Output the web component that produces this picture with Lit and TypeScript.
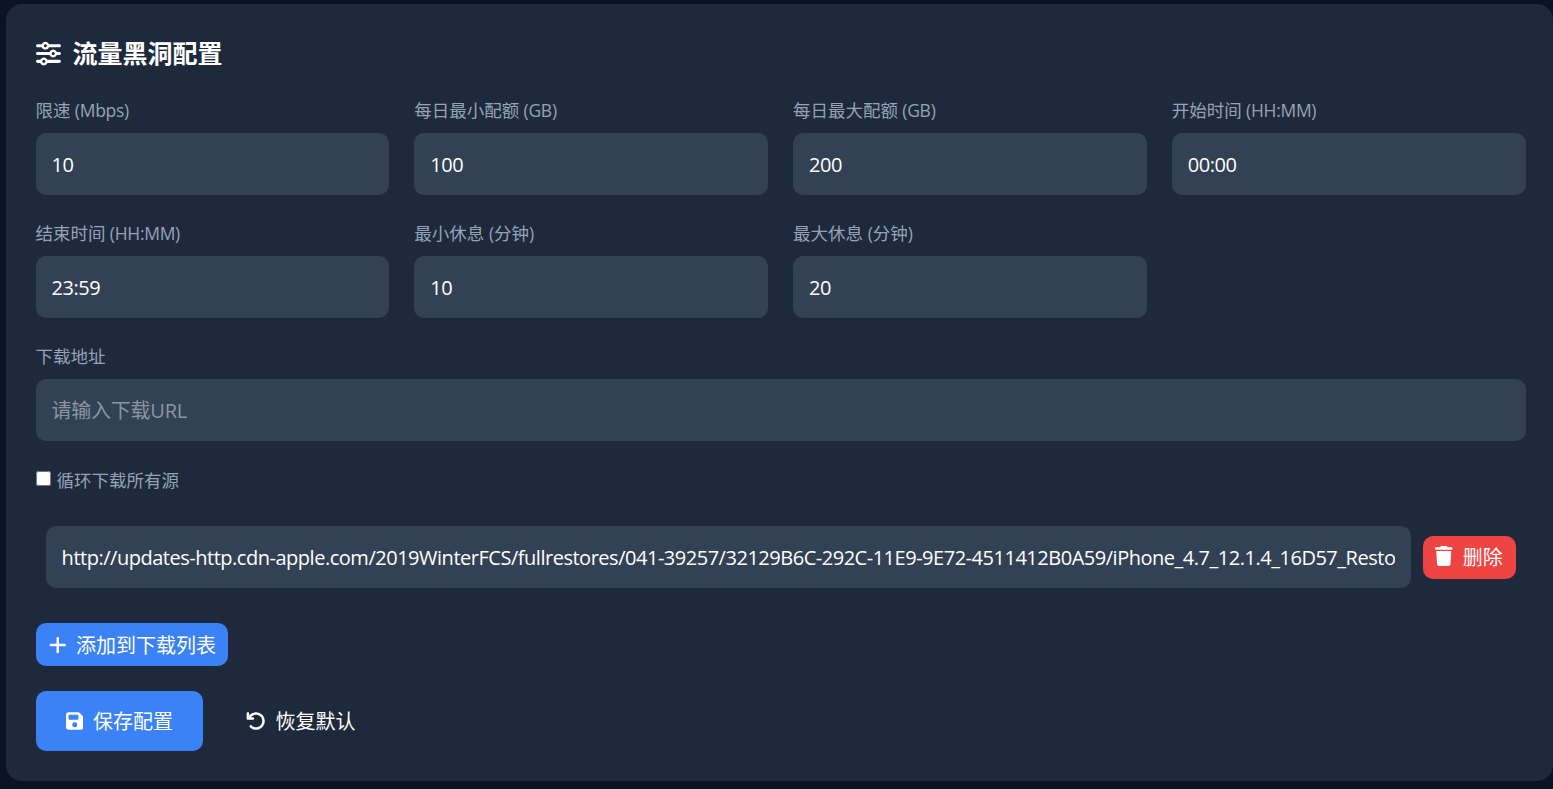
import { LitElement, html, css, svg } from "lit";
import { customElement } from "lit/decorators.js";

const icon = (vb: string, d: string, cls: string) =>
  html`<svg class="ic ${cls}" viewBox="${vb}" aria-hidden="true">${svg`<path fill="currentColor" d="${d}"></path>`}</svg>`;

const SLIDERS = "M0 416c0 17.7 14.3 32 32 32l54.7 0c12.3 28.3 40.5 48 73.3 48s61-19.7 73.3-48L480 448c17.7 0 32-14.3 32-32s-14.3-32-32-32l-246.7 0c-12.3-28.3-40.5-48-73.3-48s-61 19.7-73.3 48L32 384c-17.7 0-32 14.3-32 32zm128 0a32 32 0 1 1 64 0 32 32 0 1 1 -64 0zM320 256a32 32 0 1 1 64 0 32 32 0 1 1 -64 0zm32-80c-32.8 0-61 19.7-73.3 48L32 224c-17.7 0-32 14.3-32 32s14.3 32 32 32l246.7 0c12.3 28.3 40.5 48 73.3 48s61-19.7 73.3-48l54.7 0c17.7 0 32-14.3 32-32s-14.3-32-32-32l-54.7 0c-12.3-28.3-40.5-48-73.3-48zM192 128a32 32 0 1 1 0-64 32 32 0 1 1 0 64zm73.3-64C253 35.7 224.8 16 192 16s-61 19.7-73.3 48L32 64C14.3 64 0 78.3 0 96s14.3 32 32 32l86.7 0c12.3 28.3 40.5 48 73.3 48s61-19.7 73.3-48L480 128c17.7 0 32-14.3 32-32s-14.3-32-32-32L265.3 64z";
const PLUS = "M256 80c0-17.7-14.3-32-32-32s-32 14.3-32 32V224H48c-17.7 0-32 14.3-32 32s14.3 32 32 32H192V432c0 17.7 14.3 32 32 32s32-14.3 32-32V288H400c17.7 0 32-14.3 32-32s-14.3-32-32-32H256V80z";
const SAVE = "M64 32C28.7 32 0 60.7 0 96V416c0 35.3 28.7 64 64 64H384c35.3 0 64-28.7 64-64V173.3c0-17-6.7-33.3-18.7-45.3L352 50.7C340 38.7 323.7 32 306.7 32H64zm0 96c0-17.7 14.3-32 32-32H288c17.7 0 32 14.3 32 32v64c0 17.7-14.3 32-32 32H96c-17.7 0-32-14.3-32-32V128zM224 288a64 64 0 1 1 0 128 64 64 0 1 1 0-128z";
const UNDO = "M125.7 160H176c17.7 0 32 14.3 32 32s-14.3 32-32 32H48c-17.7 0-32-14.3-32-32V64c0-17.7 14.3-32 32-32s32 14.3 32 32v51.2L97.6 97.6c87.5-87.5 229.3-87.5 316.8 0s87.5 229.3 0 316.8s-229.3 87.5-316.8 0c-12.5-12.5-12.5-32.8 0-45.3s32.8-12.5 45.3 0c62.5 62.5 163.8 62.5 226.3 0s62.5-163.8 0-226.3s-163.8-62.5-226.3 0L125.7 160z";
const TRASH = "M135.2 17.7L128 32H32C14.3 32 0 46.3 0 64S14.3 96 32 96H416c17.7 0 32-14.3 32-32s-14.3-32-32-32H320l-7.2-14.3C307.4 6.8 296.3 0 284.2 0H163.8c-12.1 0-23.2 6.8-28.6 17.7zM416 128H32L53.2 467c1.6 25.3 22.6 45 47.9 45H346.9c25.3 0 46.3-19.7 47.9-45L416 128z";

const FIELDS: [string, string, string][] = [
  ["限速", " (Mbps)", "10"],
  ["每日最小配额", " (GB)", "100"],
  ["每日最大配额", " (GB)", "200"],
  ["开始时间", " (HH:MM)", "00:00"],
  ["结束时间", " (HH:MM)", "23:59"],
  ["最小休息 (分钟)", "", "10"],
  ["最大休息 (分钟)", "", "20"],
];
const URL_VALUE = "http://updates-http.cdn-apple.com/2019WinterFCS/fullrestores/041-39257/32129B6C-292C-11E9-9E72-4511412B0A59/iPhone_4.7_12.1.4_16D57_Restore.ipsw";

@customElement("app-root")
export class AppRoot extends LitElement {
  static styles = css`
    :host {
      display: block;
      height: 789px;
      overflow: hidden;
      background: #0c1226;
      padding: 4px 0 0 5.6px;
      box-sizing: border-box;
      font-family: "Open Sans", "Noto Sans CJK SC", sans-serif;
      color: #fff;
    }
    * { box-sizing: border-box; }
    .card {
      height: 777px;
      background: #1e293b;
      border-radius: 16px;
      padding: 30px 27.4px 30px 30px;
    }
    .title {
      display: flex;
      align-items: center;
      gap: 12px;
      margin: 0 0 25px;
      font-size: 25px;
      font-weight: 700;
      line-height: 38px;
      height: 38px;
    }
    .ic { display: block; flex: none; height: 20px; }
    .ic.w448 { width: 17.5px; }
    .ic.w512 { width: 20px; }
    .ic.big { width: 25px; height: 25px; }
    .ic.up1 { margin-bottom: 2px; }
    .ic.up2 { margin-bottom: 4px; }
    .grid {
      display: grid;
      grid-template-columns: repeat(4, 1fr);
      gap: 25px;
    }
    .field { display: flex; flex-direction: column; }
    .field.full { grid-column: 1 / -1; }
    label.lab {
      display: block;
      height: 26px;
      margin-bottom: 10px;
      font-size: 17.5px;
      line-height: 26px;
      color: #94a3b8;
      white-space: pre;
    }
    .lat { letter-spacing: -0.3px; }
    input.txt {
      display: block;
      width: 100%;
      height: 62px;
      padding: 16px;
      border: 0;
      outline: 0;
      border-radius: 10px;
      background: #334155;
      color: #fff;
      font: inherit;
      font-size: 20px;
      line-height: 30px;
      letter-spacing: -0.48px;
    }
    input.txt::placeholder { color: #8b95a3; opacity: 1; letter-spacing: -0.25px; }
    .check {
      display: flex;
      align-items: center;
      gap: 6px;
      height: 28px;
      margin-top: 25px;
      font-size: 17.5px;
      line-height: 26px;
      color: #94a3b8;
    }
    .check input { margin: 0 0 4px; width: 15px; height: 15px; }
    .urlrow {
      display: flex;
      align-items: center;
      gap: 12px;
      padding: 10px;
      margin-top: 22px;
    }
    .urlrow input { flex: 1; min-width: 0; }
    .btn {
      display: inline-flex;
      align-items: center;
      justify-content: center;
      gap: 10px;
      border: 0;
      border-radius: 10px;
      color: #fff;
      font: inherit;
      font-size: 20px;
      line-height: 30px;
    }
    .small { height: 43px; padding: 3px 12px 0 13px; }
    .blue { background: #3b82f6; }
    .red { background: #ef4444; flex: none; width: 93px; padding: 1px 0 0; }
    .add { margin-top: 25px; display: flex; }
    .actions { display: flex; align-items: center; gap: 12.5px; margin-top: 25px; }
    .large { height: 60px; padding: 1px 30px 0; }
    .ghost { background: transparent; }
  `;

  render() {
    return html`
      <div class="card">
        <h2 class="title">${icon("0 0 512 512", SLIDERS, "big")}流量黑洞配置</h2>
        <div class="grid">
          ${FIELDS.map(
            ([c, l, v]) => html`<div class="field">
              <label class="lab">${c}<span class="lat">${l}</span></label>
              <input class="txt" type="text" .value=${v} />
            </div>`
          )}
          <div class="field full">
            <label class="lab">下载地址</label>
            <input class="txt" type="text" placeholder="请输入下载URL" />
          </div>
        </div>
        <label class="check"><input type="checkbox" />循环下载所有源</label>
        <div class="urlrow">
          <input class="txt" type="text" .value=${URL_VALUE} />
          <button class="btn small red">${icon("0 0 448 512", TRASH, "w448 up2")}删除</button>
        </div>
        <div class="add">
          <button class="btn small blue">${icon("0 0 448 512", PLUS, "w448 up1")}添加到下载列表</button>
        </div>
        <div class="actions">
          <button class="btn large blue">${icon("0 0 448 512", SAVE, "w448 up1")}保存配置</button>
          <button class="btn large ghost">${icon("0 0 512 512", UNDO, "w512 up1")}恢复默认</button>
        </div>
      </div>
    `;
  }
}
